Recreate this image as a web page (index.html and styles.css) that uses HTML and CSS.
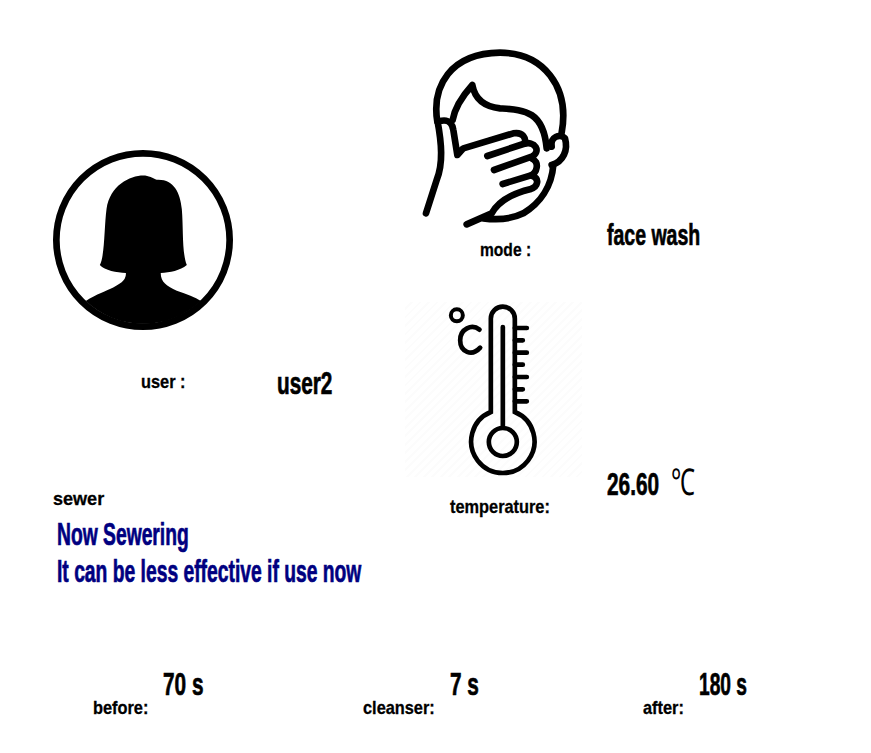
FILE: index.html
```html
<!DOCTYPE html>
<html lang="en">
<head>
<meta charset="utf-8">
<title>Wash status</title>
<link rel="stylesheet" href="styles.css">
</head>
<body>
<main class="page">
  <section class="col-left">
    <svg class="avatar" viewBox="40 -56 538 538" aria-hidden="true">
      <path fill="#000" d="M180 288C195 260 193 170 200 120C210 50 270 20 310 20C325 20 340 28 350 33C400 30 420 70 425 120C430 180 425 250 440 288C420 305 390 310 362 312C362 340 380 350 410 365C440 375 465 385 482 395A250 250 0 0 1 138 395C170 375 200 365 220 355C250 340 258 330 258 312C230 310 195 305 180 288Z"/>
      <circle cx="309" cy="213" r="259" fill="none" stroke="#000" stroke-width="20"/>
    </svg>
    <div class="row user-row">
      <span class="label user-label"><span class="squeeze">user :</span></span>
      <span class="value user-value">user2</span>
    </div>
    <div class="label sewer">sewer</div>
    <div class="message">Now Sewering</div>
    <div class="message">It can be less effective if use now</div>
  </section>
  <section class="col-right">
    <svg class="face" viewBox="60 60 450 531" aria-hidden="true">
      <g fill="none" stroke="#000" stroke-width="20" stroke-linecap="round" stroke-linejoin="round">
        <path d="M112 275C95 170 150 70 300 68C430 68 510 170 485 308"/>
        <path d="M112 270C125 340 130 400 110 450L78 550"/>
        <path d="M125 272C150 268 158 285 160 300L172 375L190 355L340 310C370 305 378 325 375 340"/>
        <path d="M158 270C165 230 190 195 217 165C225 210 255 230 300 235C370 240 430 240 440 355"/>
        <path d="M455 350C450 320 480 310 495 325C505 360 490 395 455 405"/>
        <path d="M460 405C455 470 420 520 370 550C330 570 290 570 250 565"/>
        <path d="M262 378L370 342C405 330 425 365 395 380L282 420"/>
        <path d="M395 385C420 395 412 430 390 437L308 462"/>
        <path d="M395 437C420 445 415 470 390 478C340 490 295 515 275 550L200 583"/>
      </g>
    </svg>
    <div class="row mode-row">
      <span class="label mode-label"><span class="squeeze">mode :</span></span>
      <span class="value">face wash</span>
    </div>
    <svg class="thermo" viewBox="15 25 530 525" aria-hidden="true">
      <g fill="none" stroke="#000" stroke-width="14" stroke-linecap="round">
        <path d="M272 355V75A36 36 0 0 1 344 75V355A95 95 0 1 1 272 355Z"/>
        <circle cx="308" cy="445" r="42"/>
        <path d="M308 100V400"/>
        <path d="M344 103H380M344 140H368M344 177H380M344 213H368M344 250H380M344 287H368M344 323H380"/>
        <circle cx="170" cy="65" r="18" stroke-width="12"/>
        <path d="M238 108C215 90 180 105 180 140C180 175 215 190 240 162"/>
      </g>
    </svg>
    <div class="row temp-row">
      <span class="label temp-label"><span class="squeeze">temperature:</span></span>
      <span class="value temp-value">26.60<span class="unit">℃</span></span>
    </div>
  </section>
  <section class="timers">
    <div class="timer before"><span class="label"><span class="squeeze">before:</span></span><span class="value">70 s</span></div>
    <div class="timer cleanser"><span class="label"><span class="squeeze">cleanser:</span></span><span class="value">7 s</span></div>
    <div class="timer after"><span class="label"><span class="squeeze">after:</span></span><span class="value">180 s</span></div>
  </section>
</main>
</body>
</html>
```
FILE: styles.css
```css
* { box-sizing: border-box; }
html, body { margin: 0; background: #fff; }
body { font-family: "Liberation Sans", sans-serif; color: #000; overflow: hidden; }
.page {
  width: 871px;
  height: 753px;
  display: grid;
  grid-template-columns: 405px 1fr;
  grid-template-rows: 664px 1fr;
}
.col-left { padding: 150px 0 0 53px; }
.col-right { padding-top: 50px; }
svg { display: block; overflow: visible; }
.avatar { width: 180px; height: 180px; }
.face { width: 150px; height: 177px; margin-left: 15px; }
.thermo {
  width: 177px;
  height: 175px;
  margin-top: 43px;
  background: repeating-linear-gradient(135deg, #fff 0 4px, #fcfcfc 4px 6px);
}
.row { display: flex; }
.label { font-size: 19px; font-weight: 700; line-height: 20px; white-space: nowrap; -webkit-text-stroke: 0.3px #000; }
.squeeze { display: inline-block; transform: scaleX(0.86); transform-origin: left center; }
.value {
  display: inline-block;
  font-size: 30px;
  font-weight: 700;
  line-height: 32px;
  white-space: nowrap;
  transform: scaleX(0.65);
  transform-origin: left center;
  -webkit-text-stroke: 0.7px #000;
}
.unit { margin-left: 18px; font-size: 37px; font-weight: 400; -webkit-text-stroke: 0; }
.user-row { padding-left: 88px; margin-top: 36px; }
.user-label { width: 136px; padding-top: 6px; }
.user-value { font-size: 31px; margin-top: 2px; transform: scaleX(0.67); }
.mode-row { padding-left: 75px; height: 40px; margin-top: -8px; }
.mode-label { width: 127px; padding-top: 21px; }
.mode-label .squeeze { transform: scaleX(0.82); }
.temp-row { margin-left: 45px; }
.temp-label { width: 157px; padding-top: 20px; }
.temp-value { font-size: 32px; margin-top: -10px; }
.sewer { margin-top: 89px; transform: scaleX(0.95); transform-origin: left center; }
.message {
  margin-left: 4px;
  font-size: 31px;
  font-weight: 700;
  line-height: 37px;
  color: #000080;
  white-space: nowrap;
  transform: scaleX(0.622);
  transform-origin: left center;
  -webkit-text-stroke: 0.7px #000080;
}
.sewer + .message { margin-top: 7px; }
.timers {
  grid-column: 1 / -1;
  display: grid;
  grid-template-columns: 270px 280px 1fr;
  padding-left: 93px;
}
.timer { display: flex; }
.timer .label { padding-top: 34px; }
.timer .value { margin-top: 4px; font-size: 32px; }
.before .label { width: 70px; }
.cleanser .label { width: 87px; }
.after .label { width: 56px; }
.after .value { transform: scaleX(0.6); }
```
